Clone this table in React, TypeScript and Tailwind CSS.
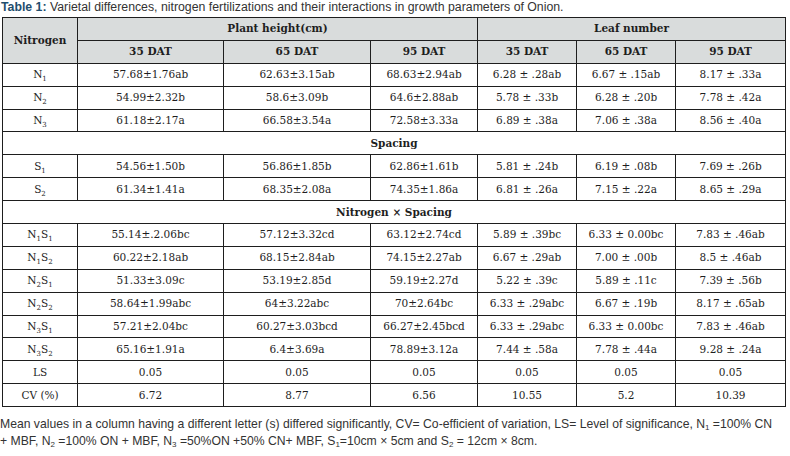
const serif = { fontFamily: '"DejaVu Serif", serif' };

type Row = { label: React.ReactNode; v: string[] };

function Sub({ b, s }: { b: string; s: string }) {
  return (
    <>
      {b}
      <sub className="text-[7px] relative top-[3px] align-baseline">{s}</sub>
    </>
  );
}

const main: Row[] = [
  { label: <Sub b="N" s="1" />, v: ["57.68±1.76ab", "62.63±3.15ab", "68.63±2.94ab", "6.28 ± .28ab", "6.67 ± .15ab", "8.17 ± .33a"] },
  { label: <Sub b="N" s="2" />, v: ["54.99±2.32b", "58.6±3.09b", "64.6±2.88ab", "5.78 ± .33b", "6.28 ± .20b", "7.78 ± .42a"] },
  { label: <Sub b="N" s="3" />, v: ["61.18±2.17a", "66.58±3.54a", "72.58±3.33a", "6.89 ± .38a", "7.06 ± .38a", "8.56 ± .40a"] },
];

const spacing: Row[] = [
  { label: <Sub b="S" s="1" />, v: ["54.56±1.50b", "56.86±1.85b", "62.86±1.61b", "5.81 ± .24b", "6.19 ± .08b", "7.69 ± .26b"] },
  { label: <Sub b="S" s="2" />, v: ["61.34±1.41a", "68.35±2.08a", "74.35±1.86a", "6.81 ± .26a", "7.15 ± .22a", "8.65 ± .29a"] },
];

const combo = (n: string, s: string) => (
  <>
    <Sub b="N" s={n} />
    <Sub b="S" s={s} />
  </>
);

const inter: Row[] = [
  { label: combo("1", "1"), v: ["55.14±.2.06bc", "57.12±3.32cd", "63.12±2.74cd", "5.89 ± .39bc", "6.33 ± 0.00bc", "7.83 ± .46ab"] },
  { label: combo("1", "2"), v: ["60.22±2.18ab", "68.15±2.84ab", "74.15±2.27ab", "6.67 ± .29ab", "7.00 ± .00b", "8.5 ± .46ab"] },
  { label: combo("2", "1"), v: ["51.33±3.09c", "53.19±2.85d", "59.19±2.27d", "5.22 ± .39c", "5.89 ± .11c", "7.39 ± .56b"] },
  { label: combo("2", "2"), v: ["58.64±1.99abc", "64±3.22abc", "70±2.64bc", "6.33 ± .29abc", "6.67 ± .19b", "8.17 ± .65ab"] },
  { label: combo("3", "1"), v: ["57.21±2.04bc", "60.27±3.03bcd", "66.27±2.45bcd", "6.33 ± .29abc", "6.33 ± 0.00bc", "7.83 ± .46ab"] },
  { label: combo("3", "2"), v: ["65.16±1.91a", "6.4±3.69a", "78.89±3.12a", "7.44 ± .58a", "7.78 ± .44a", "9.28 ± .24a"] },
  { label: "LS", v: ["0.05", "0.05", "0.05", "0.05", "0.05", "0.05"] },
  { label: "CV (%)", v: ["6.72", "8.77", "6.56", "10.55", "5.2", "10.39"] },
];

const cell = "border border-[#1e1e1e] text-center align-middle p-0";

function Rows({ rows }: { rows: Row[] }) {
  return (
    <>
      {rows.map((r, i) => (
        <tr key={i} className="h-[22.9px]">
          <td className={cell}>{r.label}</td>
          {r.v.map((x, j) => (
            <td key={j} className={cell}>{x}</td>
          ))}
        </tr>
      ))}
    </>
  );
}

function Section({ title }: { title: string }) {
  return (
    <tr className="h-[22.9px]">
      <td colSpan={7} className={`${cell} font-bold`}>{title}</td>
    </tr>
  );
}

export default function App() {
  return (
    <div className="w-[790px] h-[456px] bg-white text-[#1e1e1e] overflow-hidden" style={{ fontFamily: '"Liberation Sans", Arial, sans-serif' }}>
      <p className="text-[12.3px] leading-[15px] pl-[1px] text-[#333]">
        <span className="font-bold text-[#1f4e6e]">Table 1:</span> Varietal differences, nitrogen fertilizations and their interactions in growth parameters of Onion.
      </p>
      <table className="ml-[2px] mt-[2px] w-[783px] table-fixed border-collapse text-[10.5px] leading-[13px]" style={serif}>
        <colgroup>
          <col className="w-[75px]" />
          <col className="w-[146px]" />
          <col className="w-[147px]" />
          <col className="w-[107px]" />
          <col className="w-[99px]" />
          <col className="w-[99px]" />
          <col className="w-[110px]" />
        </colgroup>
        <thead className="bg-[#d9dcdc] font-bold">
          <tr className="h-[22.9px]">
            <th rowSpan={2} className={cell}>Nitrogen</th>
            <th colSpan={3} className={cell}>Plant height(cm)</th>
            <th colSpan={3} className={cell}>Leaf number</th>
          </tr>
          <tr className="h-[22.9px]">
            <th className={cell}>35 DAT</th>
            <th className={cell}>65 DAT</th>
            <th className={cell}>95 DAT</th>
            <th className={cell}>35 DAT</th>
            <th className={cell}>65 DAT</th>
            <th className={cell}>95 DAT</th>
          </tr>
        </thead>
        <tbody>
          <Rows rows={main} />
          <Section title="Spacing" />
          <Rows rows={spacing} />
          <Section title="Nitrogen × Spacing" />
          <Rows rows={inter} />
        </tbody>
      </table>
      <p className="mt-[9px] text-[12.2px] leading-[17px] text-[#333] whitespace-nowrap">
        Mean values in a column having a different letter (s) differed significantly, CV= Co-efficient of variation, LS= Level of significance, N
        <sub className="text-[8px]">1</sub> =100% CN
        <br />+ MBF, N<sub className="text-[8px]">2</sub> =100% ON + MBF, N
        <sub className="text-[8px]">3</sub> =50%ON +50% CN+ MBF, S<sub className="text-[8px]">1</sub>=10cm × 5cm and S
        <sub className="text-[8px]">2</sub> = 12cm × 8cm.
      </p>
    </div>
  );
}
